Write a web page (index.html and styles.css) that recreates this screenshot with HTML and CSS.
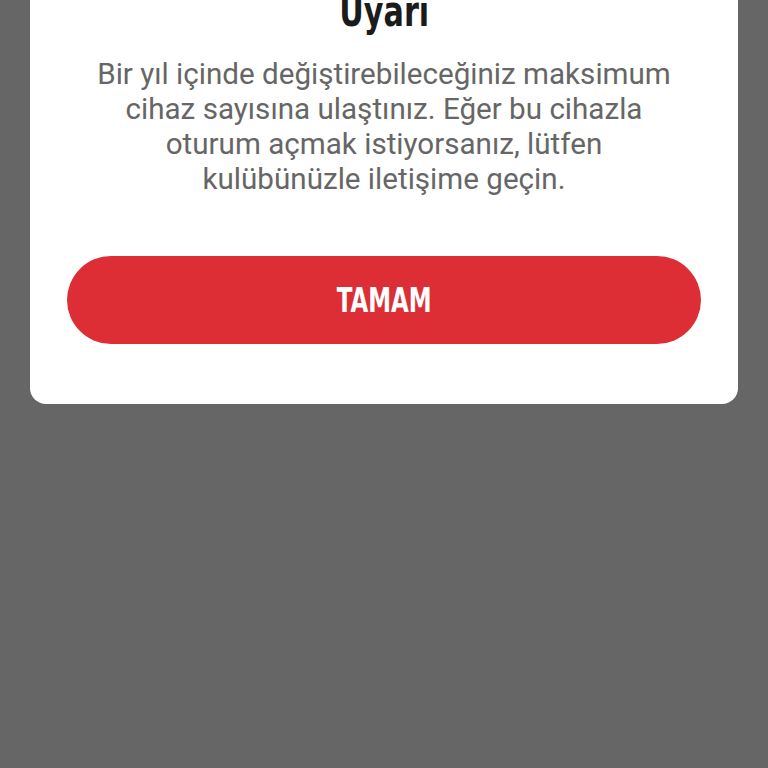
FILE: index.html
```html
<!DOCTYPE html>
<html lang="tr">
<head>
    <meta charset="UTF-8">
    <meta name="viewport" content="width=device-width, initial-scale=1.0">
    <title>Uyarı</title>
    <link rel="stylesheet" href="styles.css">
</head>
<body>

<div class="overlay">
    <!-- Alert dialog -->
    <div class="dialog">
        <h2 class="dialog-title">Uyarı</h2>
        <p class="dialog-text">Bir yıl içinde değiştirebileceğiniz maksimum cihaz sayısına ulaştınız. Eğer bu cihazla oturum açmak istiyorsanız, lütfen kulübünüzle iletişime geçin.</p>
        <button class="dialog-button"><span class="button-label">TAMAM</span></button>
    </div>
</div>

</body>
</html>
```

FILE: styles.css
```css
body {
    margin: 0;
    background-color: #666666;
    font-family: 'Roboto', sans-serif;
    height: 768px;
    overflow: hidden;
}

.overlay {
    padding: 0 30px;
}

.dialog {
    background-color: #fff;
    border-radius: 0 0 16px 16px;
    margin-top: -18px;
    padding: 0 37px 60px;
    display: flex;
    flex-direction: column;
    align-items: center;
}

.dialog-title {
    margin: 0;
    font-family: 'DejaVu Sans Condensed', 'Liberation Sans Narrow', sans-serif;
    font-weight: 700;
    font-size: 42px;
    line-height: 60px;
    color: #1b1b1b;
    transform: scaleX(0.8);
}

.dialog-text {
    margin: 15px 0 0;
    font-size: 29.6px;
    line-height: 35px;
    color: #666;
    text-align: center;
    max-width: 590px;
}

.dialog-button {
    margin-top: 59px;
    width: 100%;
    height: 88px;
    border: none;
    border-radius: 44px;
    background-color: #dd2e35;
    color: #fff;
    font-family: 'DejaVu Sans Condensed', 'Liberation Sans Narrow', sans-serif;
    font-weight: 700;
    font-size: 34px;
    cursor: pointer;
}

.button-label {
    display: inline-block;
    transform: scaleX(0.75);
}
```
